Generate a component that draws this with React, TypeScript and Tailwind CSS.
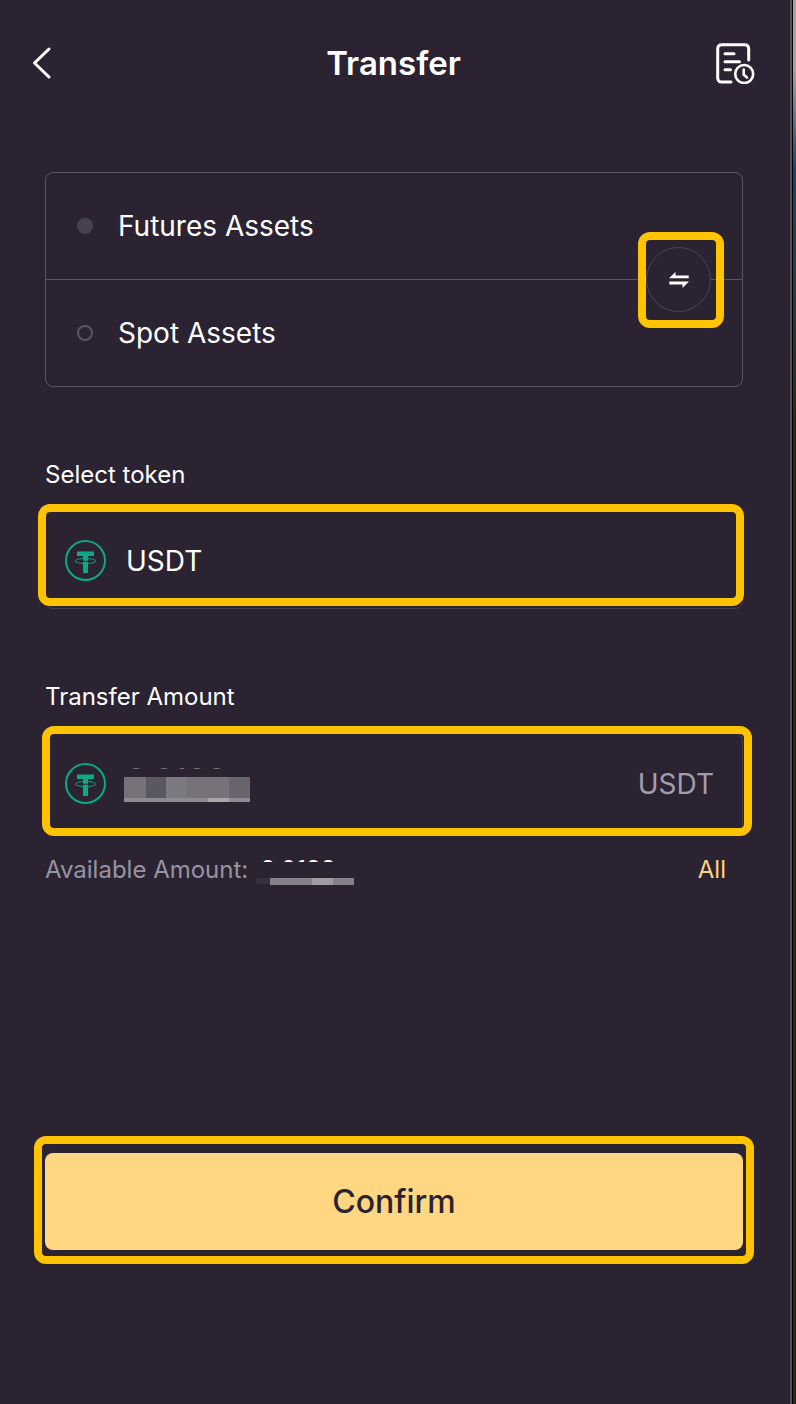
import { useState } from "react"

function TetherIcon() {
  return (
    <svg width="41" height="41" viewBox="0 0 41 41" fill="none" className="shrink-0" aria-hidden="true">
      <circle cx="20.5" cy="20.5" r="19.5" stroke="#0BAA87" strokeWidth="2" />
      <path d="M12 11.5H29V16H23V33H18V16H12V11.5Z" fill="#0BAA87" />
      <path d="M18 18.6C13.500 18.900 10.300 19.900 10.300 21.100C10.300 22.500 14.800 23.500 20.500 23.500C26.200 23.500 30.700 22.500 30.700 21.100C30.700 19.900 27.500 18.900 23 18.600" stroke="#0BAA87" strokeWidth="1" />
      <path d="M18 21.200C19.500 21.400 21.500 21.400 23 21.200" stroke="#2B2331" strokeWidth="1" />
    </svg>
  )
}

function HistoryIcon() {
  return (
    <svg width="40" height="42" viewBox="0 0 40 42" fill="none" stroke="white" strokeWidth="3" strokeLinecap="round" aria-hidden="true">
      <path d="M16 40H7C4.200 40 2.700 38.500 2.700 35.700V7C2.700 4.200 4.200 2.700 7 2.700H29.500C32.300 2.700 33.700 4.200 33.700 7V18" />
      <path d="M10 11.700H19M10 19.700H24.500M10 27.700H15.500" />
      <circle cx="29.200" cy="32" r="9" strokeWidth="2.600" />
      <path d="M28.700 27.500V32.700L32 35.500" strokeWidth="2.600" />
    </svg>
  )
}

interface HighlightProps {
  className: string
}

function Highlight({ className }: HighlightProps) {
  return <div className={`pointer-events-none absolute rounded-xl border-8 border-[#FFC300] ${className}`} />
}

export default function App() {
  const [source, setSource] = useState("futures")
  const [token, setToken] = useState("USDT")
  const [amount, setAmount] = useState("0.0188")

  const swap = () => setSource(source === "futures" ? "spot" : "futures")

  return (
    <div className="flex min-h-screen bg-[#2B2331] font-['Inter',sans-serif] text-white">
      <main className="flex-1 pb-[152px]">
        <header className="flex h-[126px] items-center justify-between pl-8 pr-[35px]">
          <button type="button" aria-label="Back" className="flex w-10">
            <svg width="20" height="34" viewBox="0 0 20 34" fill="none" aria-hidden="true">
              <path d="M17 3L2.500 17L17 31" stroke="white" strokeWidth="3" strokeLinecap="round" strokeLinejoin="round" />
            </svg>
          </button>
          <h1 className="text-[33px] font-semibold leading-10">Transfer</h1>
          <button type="button" aria-label="Transfer history">
            <HistoryIcon />
          </button>
        </header>

        <form className="pl-[45px] pr-[47px] pt-[46px]" onSubmit={(e) => e.preventDefault()}>
          <div className="relative rounded-lg border border-[#5B5562]">
            <label className="flex h-[107px] items-center gap-[25px] border-b border-[#5B5562] pl-[31px] text-[28px]">
              <input
                type="radio"
                name="account"
                checked={source === "futures"}
                onChange={() => setSource("futures")}
                className="size-4 appearance-none rounded-full border-2 border-[#5B5562] checked:border-[#46424F] checked:bg-[#46424F]"
              />
              Futures Assets
            </label>
            <label className="flex h-[106px] items-center gap-[25px] pl-[31px] text-[28px]">
              <input
                type="radio"
                name="account"
                checked={source === "spot"}
                onChange={() => setSource("spot")}
                className="size-4 appearance-none rounded-full border-2 border-[#5B5562] checked:border-[#46424F] checked:bg-[#46424F]"
              />
              Spot Assets
            </label>
            <button
              type="button"
              aria-label="Swap accounts"
              onClick={swap}
              className="absolute right-[31px] top-[74px] flex size-[65px] items-center justify-center rounded-full border border-[#4B4652] bg-[#2B2331]"
            >
              <svg width="20" height="16" viewBox="0 0 20 16" fill="white" aria-hidden="true">
                <path d="M0 6.300L6.500 0V3.500H19.700V6.300H0Z" />
                <path d="M20 9.500L13.500 16V12.500H0.300V9.500H20Z" />
              </svg>
            </button>
            <Highlight className="right-[18px] top-[59px] h-24 w-[86px]" />
          </div>

          <label htmlFor="token" className="mt-[72px] block text-2xl leading-8">
            Select token
          </label>
          <div className="relative mt-5 flex h-[98px] items-center gap-5 rounded-lg border border-[#46404D] px-[19px]">
            <TetherIcon />
            <select
              id="token"
              value={token}
              onChange={(e) => setToken(e.target.value)}
              className="min-w-0 flex-1 appearance-none bg-transparent pt-0.5 text-[28px] outline-none"
            >
              <option value="USDT">USDT</option>
            </select>
            <Highlight className="-left-2 -right-0.5 -top-2 bottom-0.5" />
          </div>

          <label htmlFor="amount" className="mt-[72px] block text-2xl leading-8">
            Transfer Amount
          </label>
          <div className="relative mt-5 flex h-[100px] items-center gap-5 rounded-lg border border-[#46404D] pl-[19px] pr-7">
            <TetherIcon />
            <div className="relative min-w-0 flex-1">
              <input
                id="amount"
                type="text"
                value={amount}
                onChange={(e) => setAmount(e.target.value)}
                className="block h-10 w-full bg-transparent pb-1 text-[32px] text-[#77727D] outline-none"
              />
              <div className="absolute -left-1 top-1.5 h-9 w-40 bg-[#2B2331] pl-0.5 pt-2">
                <svg width="126" height="25" viewBox="0 0 126 25" shapeRendering="crispEdges" aria-hidden="true">
                  <path d="M0 0H126V25H0Z" fill="#777179" />
                  <path d="M22 0H42V21H22Z" fill="#5B5761" />
                  <path d="M42 0H63V21H42Z" fill="#7D7981" />
                  <path d="M105 0H126V21H105Z" fill="#67656D" />
                  <path d="M0 21H126V25H0Z" fill="#8F8B92" />
                  <path d="M84 21H105V25H84Z" fill="#AAA6AC" />
                </svg>
              </div>
            </div>
            <span className="pt-0.5 text-[28px] text-[#A09EAC]">USDT</span>
            <Highlight className="-left-1 -right-2.5 -top-2 -bottom-1" />
          </div>

          <div className="mt-[21px] flex h-8 items-center pr-[17px] text-2xl">
            <span className="text-[#9694A3]">Available Amount:</span>
            <div className="relative ml-3 h-8 flex-1 leading-8">
              0.0188
              <div className="absolute -left-1 top-2 h-6 w-[98px] bg-[#2B2331] pt-4">
                <svg width="98" height="7" viewBox="0 0 98 7" shapeRendering="crispEdges" aria-hidden="true">
                  <path d="M0 0H14V6H0Z" fill="#35303B" />
                  <path d="M14 0H98V7H14Z" fill="#85818A" />
                  <path d="M56 0H77V7H56Z" fill="#A09CA3" />
                </svg>
              </div>
            </div>
            <button type="button" className="text-[#FFD27D]">
              All
            </button>
          </div>

          <div className="relative mt-[267px]">
            <button type="submit" className="block h-[97px] w-full rounded-lg bg-[#FFD782] text-[32px] font-medium text-[#2B2331]">
              Confirm
            </button>
            <Highlight className="-inset-x-[11px] -bottom-3.5 -top-[17px]" />
          </div>
        </form>
      </main>
      <div className="w-1.5 border-l-2 border-[#55515A] bg-black pl-px">
        <div className="h-full bg-linear-to-b from-[#A3A19C] from-5% via-[#174670] via-12% to-[#2C2B0A] to-30%" />
      </div>
    </div>
  )
}
